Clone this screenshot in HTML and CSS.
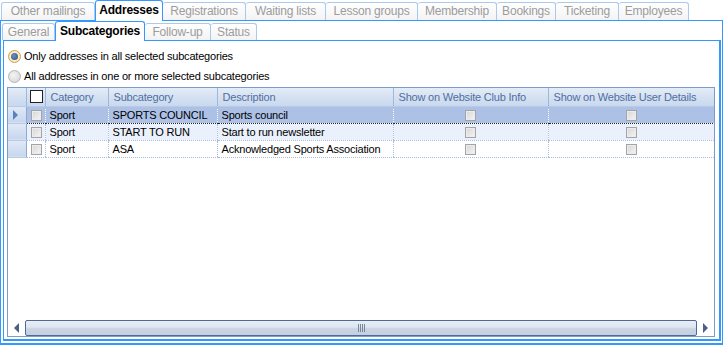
FILE: index.html
```html
<!DOCTYPE html>
<html>
<head>
<meta charset="utf-8">
<link rel="stylesheet" href="styles.css">
</head>
<body>
<div class="app">
  <div class="tabs outer-tabs">
    <div class="tab first">Other mailings</div>
    <div class="tab active">Addresses</div>
    <div class="tab">Registrations</div>
    <div class="tab">Waiting lists</div>
    <div class="tab">Lesson groups</div>
    <div class="tab">Membership</div>
    <div class="tab">Bookings</div>
    <div class="tab">Ticketing</div>
    <div class="tab">Employees</div>
  </div>
  <div class="outer-panel">
    <div class="tabs sub-tabs">
      <div class="tab first">General</div>
      <div class="tab active">Subcategories</div>
      <div class="tab">Follow-up</div>
      <div class="tab">Status</div>
    </div>
    <div class="inner-panel">
      <label class="radio-row"><span class="radio checked"><span class="dot"></span></span>Only addresses in all selected subcategories</label>
      <label class="radio-row"><span class="radio"></span>All addresses in one or more selected subcategories</label>
      <div class="grid-box">
        <div class="grid-body">
          <table class="grid">
            <colgroup>
              <col class="c-ind"><col class="c-chk"><col class="c-cat"><col class="c-sub"><col class="c-desc"><col class="c-club"><col class="c-user">
            </colgroup>
            <thead>
              <tr>
                <th class="ind"></th>
                <th class="chk"><span class="hbox"></span></th>
                <th>Category</th>
                <th>Subcategory</th>
                <th>Description</th>
                <th>Show on Website Club Info</th>
                <th>Show on Website User Details</th>
              </tr>
            </thead>
            <tbody>
              <tr class="sel">
                <td class="ind"><span class="arrow"></span></td>
                <td class="chk"><span class="cb"></span></td>
                <td>Sport</td>
                <td>SPORTS COUNCIL</td>
                <td>Sports council</td>
                <td class="ctr"><span class="cb"></span></td>
                <td class="ctr last"><span class="cb"></span></td>
              </tr>
              <tr class="alt">
                <td class="ind"></td>
                <td class="chk"><span class="cb"></span></td>
                <td>Sport</td>
                <td>START TO RUN</td>
                <td>Start to run newsletter</td>
                <td class="ctr"><span class="cb"></span></td>
                <td class="ctr"><span class="cb"></span></td>
              </tr>
              <tr>
                <td class="ind"></td>
                <td class="chk"><span class="cb"></span></td>
                <td>Sport</td>
                <td>ASA</td>
                <td>Acknowledged Sports Association</td>
                <td class="ctr"><span class="cb"></span></td>
                <td class="ctr"><span class="cb"></span></td>
              </tr>
            </tbody>
          </table>
        </div>
        <div class="hscroll">
          <div class="sbtn left"><span class="tri-l"></span></div>
          <div class="thumb"><span class="grip"></span></div>
          <div class="sbtn right"><span class="tri-r"></span></div>
        </div>
      </div>
    </div>
  </div>
</div>
</body>
</html>
```
FILE: styles.css
```css
* { box-sizing: border-box; }
html, body { margin: 0; padding: 0; background: #fff; }
body {
  width: 723px;
  height: 345px;
  overflow: hidden;
  font-family: "Liberation Sans", Arial, sans-serif;
  font-size: 11px;
  letter-spacing: -0.2px;
  color: #000;
}
.app { display: flex; flex-direction: column; height: 345px; }

.tabs { display: flex; align-items: flex-end; height: 20px; }
.outer-tabs { padding-left: 1px; }
.tab {
  height: 18px;
  padding: 0;
  text-align: center;
  border: 1px solid #a9c9ef;
  border-bottom: none;
  border-left: none;
  border-radius: 3px 3px 0 0;
  background: linear-gradient(#ffffff, #f3f3f3);
  color: #9c9c9c;
  font-size: 12px;
  line-height: 17px;
  white-space: nowrap;
}
.tab.first { border-left: 1px solid #a9c9ef; }
.tab.active {
  background: #fff;
  color: #000;
  font-weight: bold;
  border: 1px solid #3399ff;
  border-bottom: none;
  line-height: 19px;
  position: relative;
  z-index: 1;
  margin-bottom: -1px;
  height: 21px;
}

.outer-tabs .tab:nth-child(1) { width: 94px; }
.outer-tabs .tab:nth-child(2) { width: 68px; }
.outer-tabs .tab:nth-child(3) { width: 83px; }
.outer-tabs .tab:nth-child(4) { width: 80px; }
.outer-tabs .tab:nth-child(5) { width: 92px; }
.outer-tabs .tab:nth-child(6) { width: 79px; }
.outer-tabs .tab:nth-child(7) { width: 59px; }
.outer-tabs .tab:nth-child(8) { width: 63px; }
.outer-tabs .tab:nth-child(9) { width: 70px; }

.sub-tabs .tab:nth-child(1) { width: 53px; }
.sub-tabs .tab:nth-child(2) { width: 90px; }
.sub-tabs .tab:nth-child(3) { width: 66px; }
.sub-tabs .tab:nth-child(4) { width: 46px; }

.outer-panel {
  flex: 1;
  border: 1px solid #3399ff;
  border-bottom-width: 2px;
  display: flex;
  flex-direction: column;
}
.sub-tabs { height: 19px; padding-left: 1px; }
.sub-tabs .tab { height: 17px; line-height: 16px; }
.sub-tabs .tab.active { height: 20px; line-height: 19px; }

.inner-panel {
  flex: 1;
  margin: 0 1px 2px 2px;
  border: 1px solid #3399ff;
  border-right-width: 2px;
  border-bottom-width: 2px;
  display: flex;
  flex-direction: column;
  padding: 5px 4px 2px 3px;
}

.radio-row {
  display: flex;
  align-items: center;
  height: 20px;
  font-size: 11px;
  color: #000;
  padding-left: 1px;
}
.radio {
  width: 13px; height: 13px;
  border-radius: 50%;
  border: 1px solid #b5b5b5;
  background: radial-gradient(circle at 40% 40%, #f4f4f4, #d2d2d2);
  margin-right: 3px;
  display: flex; align-items: center; justify-content: center;
}
.radio.checked {
  border: 1px solid #c8a24a;
  background: radial-gradient(circle, #fff6dc 40%, #f3d58a 100%);
}
.radio .dot {
  width: 7px; height: 7px; border-radius: 50%;
  background: radial-gradient(circle at 40% 40%, #6f8fc0, #2a4a86);
}

.grid-box {
  flex: 1;
  margin-top: 1px;
  border: 1px solid #7a9ccc;
  display: flex;
  flex-direction: column;
  background: #fff;
}
.grid-body { flex: 1; overflow: hidden; }
.grid {
  border-collapse: collapse;
  table-layout: fixed;
  width: 706px;
  font-size: 11px;
}
.c-ind { width: 18px; }
.c-chk { width: 19px; }
.c-cat { width: 63px; }
.c-sub { width: 109px; }
.c-desc { width: 176px; }
.c-club { width: 155px; }
.c-user { width: 166px; }

.grid th {
  height: 18px;
  background: linear-gradient(#e4ecf7, #d3e0f1 55%, #c9d8ee);
  color: #4f6f9f;
  font-weight: normal;
  text-align: left;
  padding: 0 0 0 5px;
  border-left: 1px solid #9fb7d9;
  white-space: nowrap;
  overflow: hidden;
  border-bottom: 1px solid #b8cbe6;
}
.grid th.ind { border-left: none; padding: 0; border-right: 1px solid #9fb7d9; }
.grid th.chk { padding: 0 0 0 3px; border-left: none; }
.hbox {
  display: block;
  width: 13px; height: 13px;
  border: 1px solid #222;
  background: #fff;
}
.grid td {
  height: 17px;
  padding: 0 0 0 4px;
  border-left: 1px dotted #a6bde0;
  border-bottom: 1px dotted #a6bde0;
  white-space: nowrap;
  overflow: hidden;
  color: #000;
}
.grid td.ind {
  padding: 0;
  border-left: none;
  border-right: 1px solid #8fa9d2;
  border-bottom: 1px solid #b8cbe6;
  background: linear-gradient(#e0e9f6, #c7d6ee);
}
.grid td.chk { padding: 0 0 0 4px; border-left: none; }
.grid td.ctr { text-align: center; padding: 0; }
.grid tr.sel td:not(.ind) { background: #adc0e6; border-top: 1px dotted #222; border-bottom: 1px dotted #222; }
.grid tr.sel td.last { border-right: 1px dotted #222; }
.grid tr.alt td:not(.ind) { background: #eaf1fc; }

.cb {
  display: inline-block;
  vertical-align: middle;
  width: 11px; height: 11px;
  border: 1px solid #a4a4a4;
  background: linear-gradient(135deg, #d6d6d6, #f5f5f5);
  box-shadow: inset 0 0 0 1px #ececec;
}
.arrow {
  display: block;
  margin-left: 5px;
  width: 0; height: 0;
  border-top: 5px solid transparent;
  border-bottom: 5px solid transparent;
  border-left: 5px solid #5a80bd;
}

.hscroll {
  height: 16px;
  display: flex;
  align-items: stretch;
}
.sbtn {
  width: 17px;
  display: flex; align-items: center; justify-content: center;
}
.tri-l { width: 0; height: 0; border-top: 5px solid transparent; border-bottom: 5px solid transparent; border-right: 5px solid #4d6185; }
.tri-r { width: 0; height: 0; border-top: 5px solid transparent; border-bottom: 5px solid transparent; border-left: 5px solid #4d6185; }
.thumb {
  flex: 1;
  border: 1px solid #4f6a9a;
  border-radius: 2px;
  background: linear-gradient(#e8eef5, #dde5ef 45%, #c9d5e4 55%, #c4d0e0);
  display: flex; align-items: center; justify-content: center;
}
.grip {
  width: 7px; height: 8px;
  background: repeating-linear-gradient(90deg, #7a879a 0 1px, transparent 1px 2px);
}
```
